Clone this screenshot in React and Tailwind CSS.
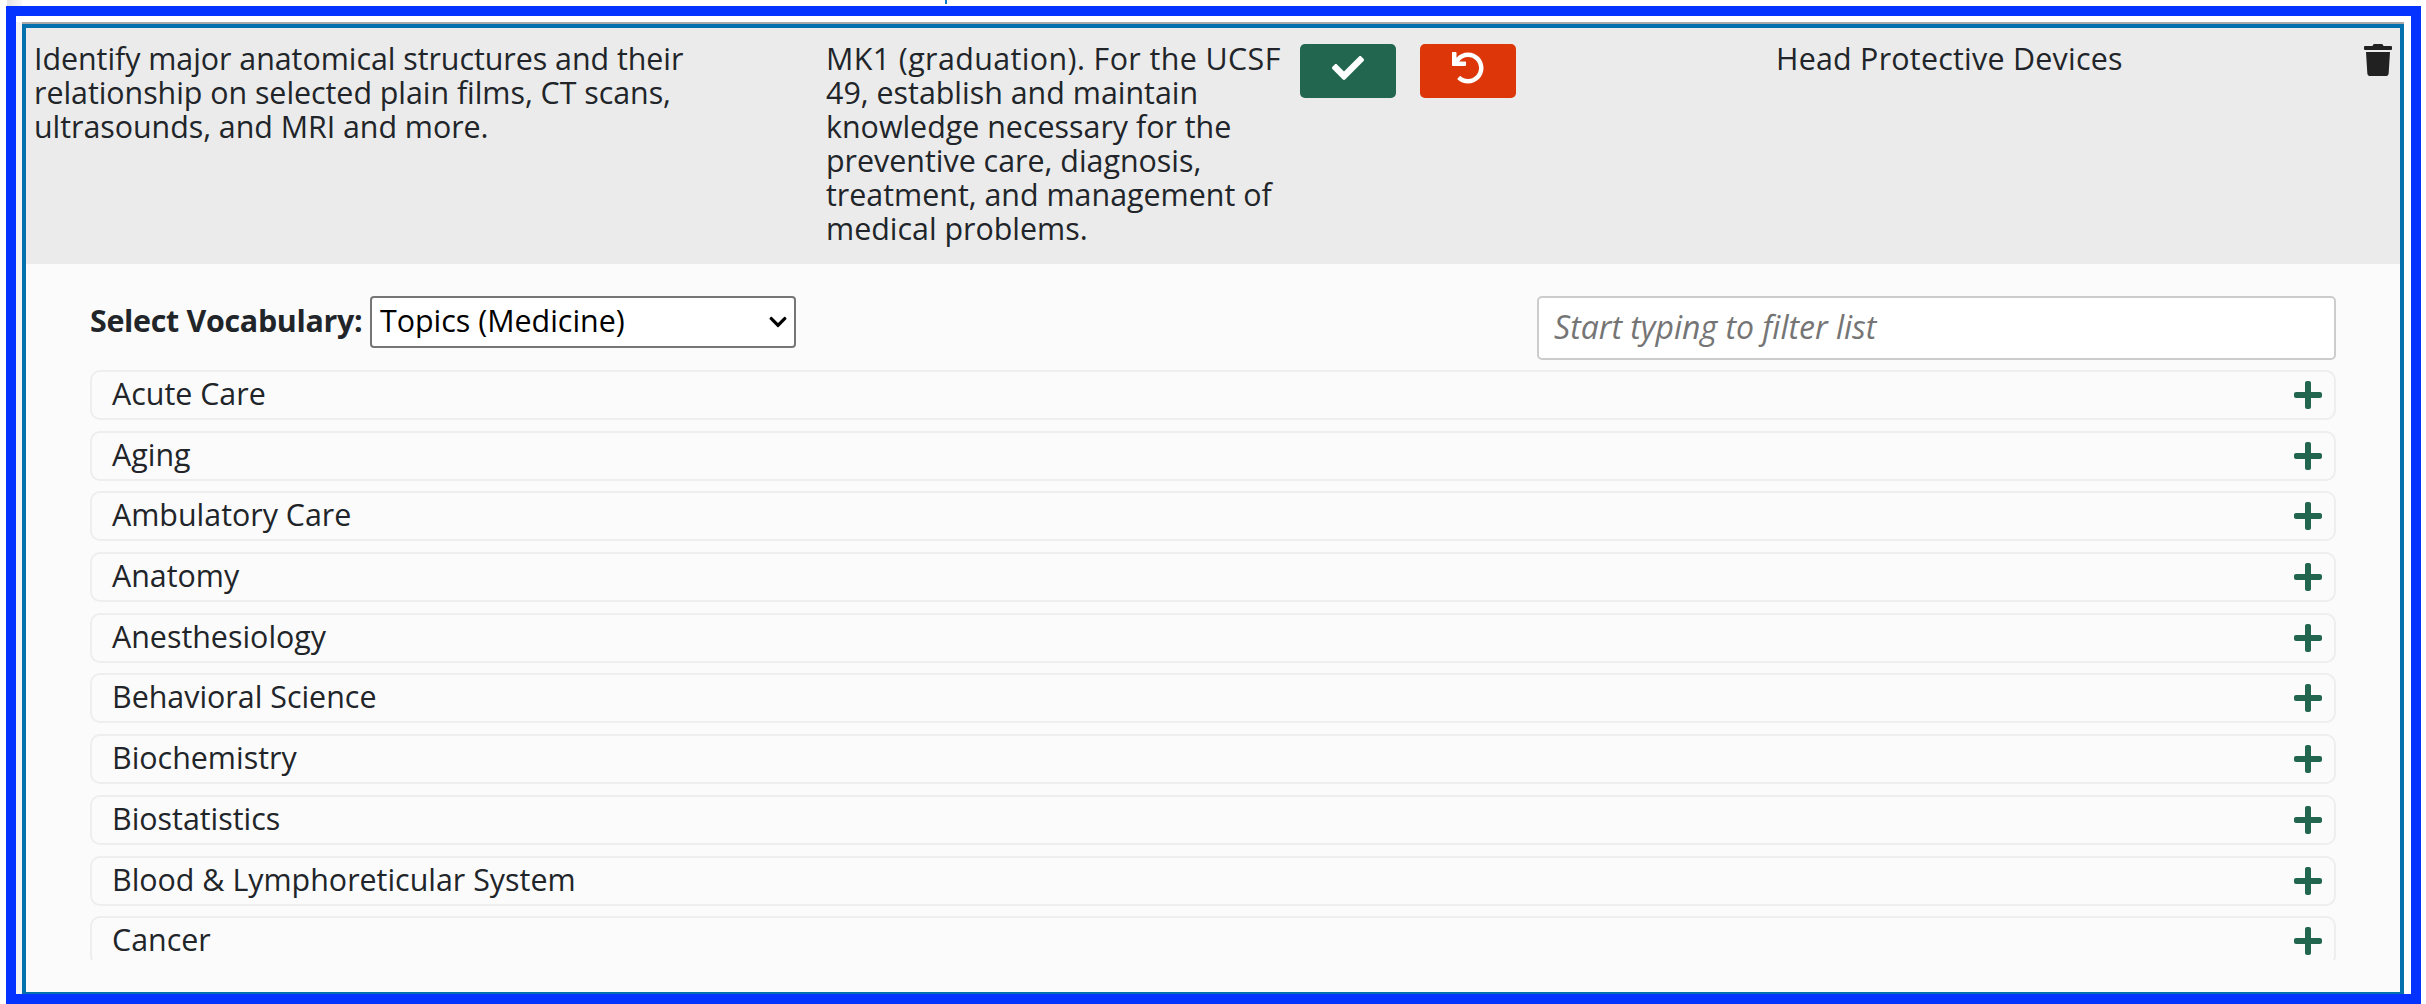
import { FaCheck, FaUndo, FaTrash, FaPlus, FaChevronDown } from 'react-icons/fa';

const topics = [
  'Acute Care',
  'Aging',
  'Ambulatory Care',
  'Anatomy',
  'Anesthesiology',
  'Behavioral Science',
  'Biochemistry',
  'Biostatistics',
  'Blood & Lymphoreticular System',
  'Cancer',
];

export default function App() {
  return (
    <div className="w-[2426px] h-[1004px] overflow-hidden bg-white font-['Open_Sans',sans-serif] text-[30.4px] leading-[34px] text-[#212529]">
      {/* bits of the page above showing through */}
      <div className="flex h-[6px] pl-[7px]">
        <div className="w-[15px] h-[6px] bg-gradient-to-r from-[#e4e4e4] to-[#f8f8f8]" />
        <div className="ml-[923px] w-[2px] h-[4px] bg-[#0d7ec4]" />
      </div>

      <div className="ml-[6px] w-[2415px] h-[998px] border-[10px] border-[#0433ff] pt-[6px] pr-[7px]">
        <div className="h-[972px] border-l-[6px] border-[#f4f4f4]">
          <div className="h-[972px] border-t-2 border-[#a9a9a9]">
            <div className="h-[970px] border-x-4 border-t-4 border-b-2 border-[#0271ae] bg-[#fbfbfb]">
              {/* Row being edited */}
              <div className="flex h-[236px] bg-[#ebebeb] pt-[14px]">
                <div className="w-[800px] pl-[8px] tracking-[-0.04px]">
                  Identify major anatomical structures and their<br />
                  relationship on selected plain films, CT scans,<br />
                  ultrasounds, and MRI and more.
                </div>
                <div className="w-[474px]">
                  <span className="tracking-[0.4px]">MK1 (graduation). For the UCSF</span><br />
                  49, establish and maintain<br />
                  knowledge necessary for the<br />
                  preventive care, diagnosis,<br />
                  treatment, and management of<br />
                  medical problems.
                </div>
                <div className="flex gap-[24px] items-start pt-[2px] w-[476px]">
                  <button className="w-[96px] h-[54px] pb-[6px] rounded-[5px] bg-[#236650] text-white flex items-center justify-center">
                    <FaCheck className="text-[32px]" />
                  </button>
                  <button className="w-[96px] h-[54px] pb-[6px] rounded-[5px] bg-[#dc3609] text-white flex items-center justify-center">
                    <FaUndo className="text-[32px]" />
                  </button>
                </div>
                <div className="w-[588px] tracking-[0.25px]">Head Protective Devices</div>
                <FaTrash className="w-[28px] h-[32px] mt-[2px] text-[#212121]" />
              </div>

              {/* Vocabulary picker */}
              <div className="pt-[32px] pl-[64px] w-[2310px]">
                <div className="flex justify-between items-start mb-[10px]">
                  <div className="flex items-center">
                    <label className="font-bold w-[280px] pb-[2px] tracking-[-0.3px] whitespace-nowrap">Select Vocabulary:</label>
                    <div className="relative">
                      <select className="block appearance-none w-[426px] h-[52px] border-2 border-[#767676] rounded-[4px] bg-white pl-[8px] pb-[2px] text-black">
                        <option>Topics (Medicine)</option>
                      </select>
                      <FaChevronDown className="absolute right-[9px] top-[16px] w-[18px] h-[20px] text-black pointer-events-none" />
                    </div>
                  </div>
                  <input
                    className="w-[799px] h-[64px] border-2 border-[#ccc] rounded-[5px] bg-white pl-[15px] pr-[16px] pb-[3px] text-[32px] placeholder:italic placeholder:text-[#757575]"
                    placeholder="Start typing to filter list"
                  />
                </div>

                <div className="h-[590px] overflow-hidden flex flex-col gap-[10.7px]">
                  {topics.map((t) => (
                    <div
                      key={t}
                      className="h-[50px] shrink-0 flex items-center justify-between border-2 border-[#eeeeee] rounded-[10px] pl-[20px] pr-[12px]"
                    >
                      <span className="pb-[2px]">{t}</span>
                      <FaPlus className="w-[28px] h-[32px] text-[#236650]" />
                    </div>
                  ))}
                </div>
              </div>
            </div>
          </div>
        </div>
      </div>
    </div>
  );
}
